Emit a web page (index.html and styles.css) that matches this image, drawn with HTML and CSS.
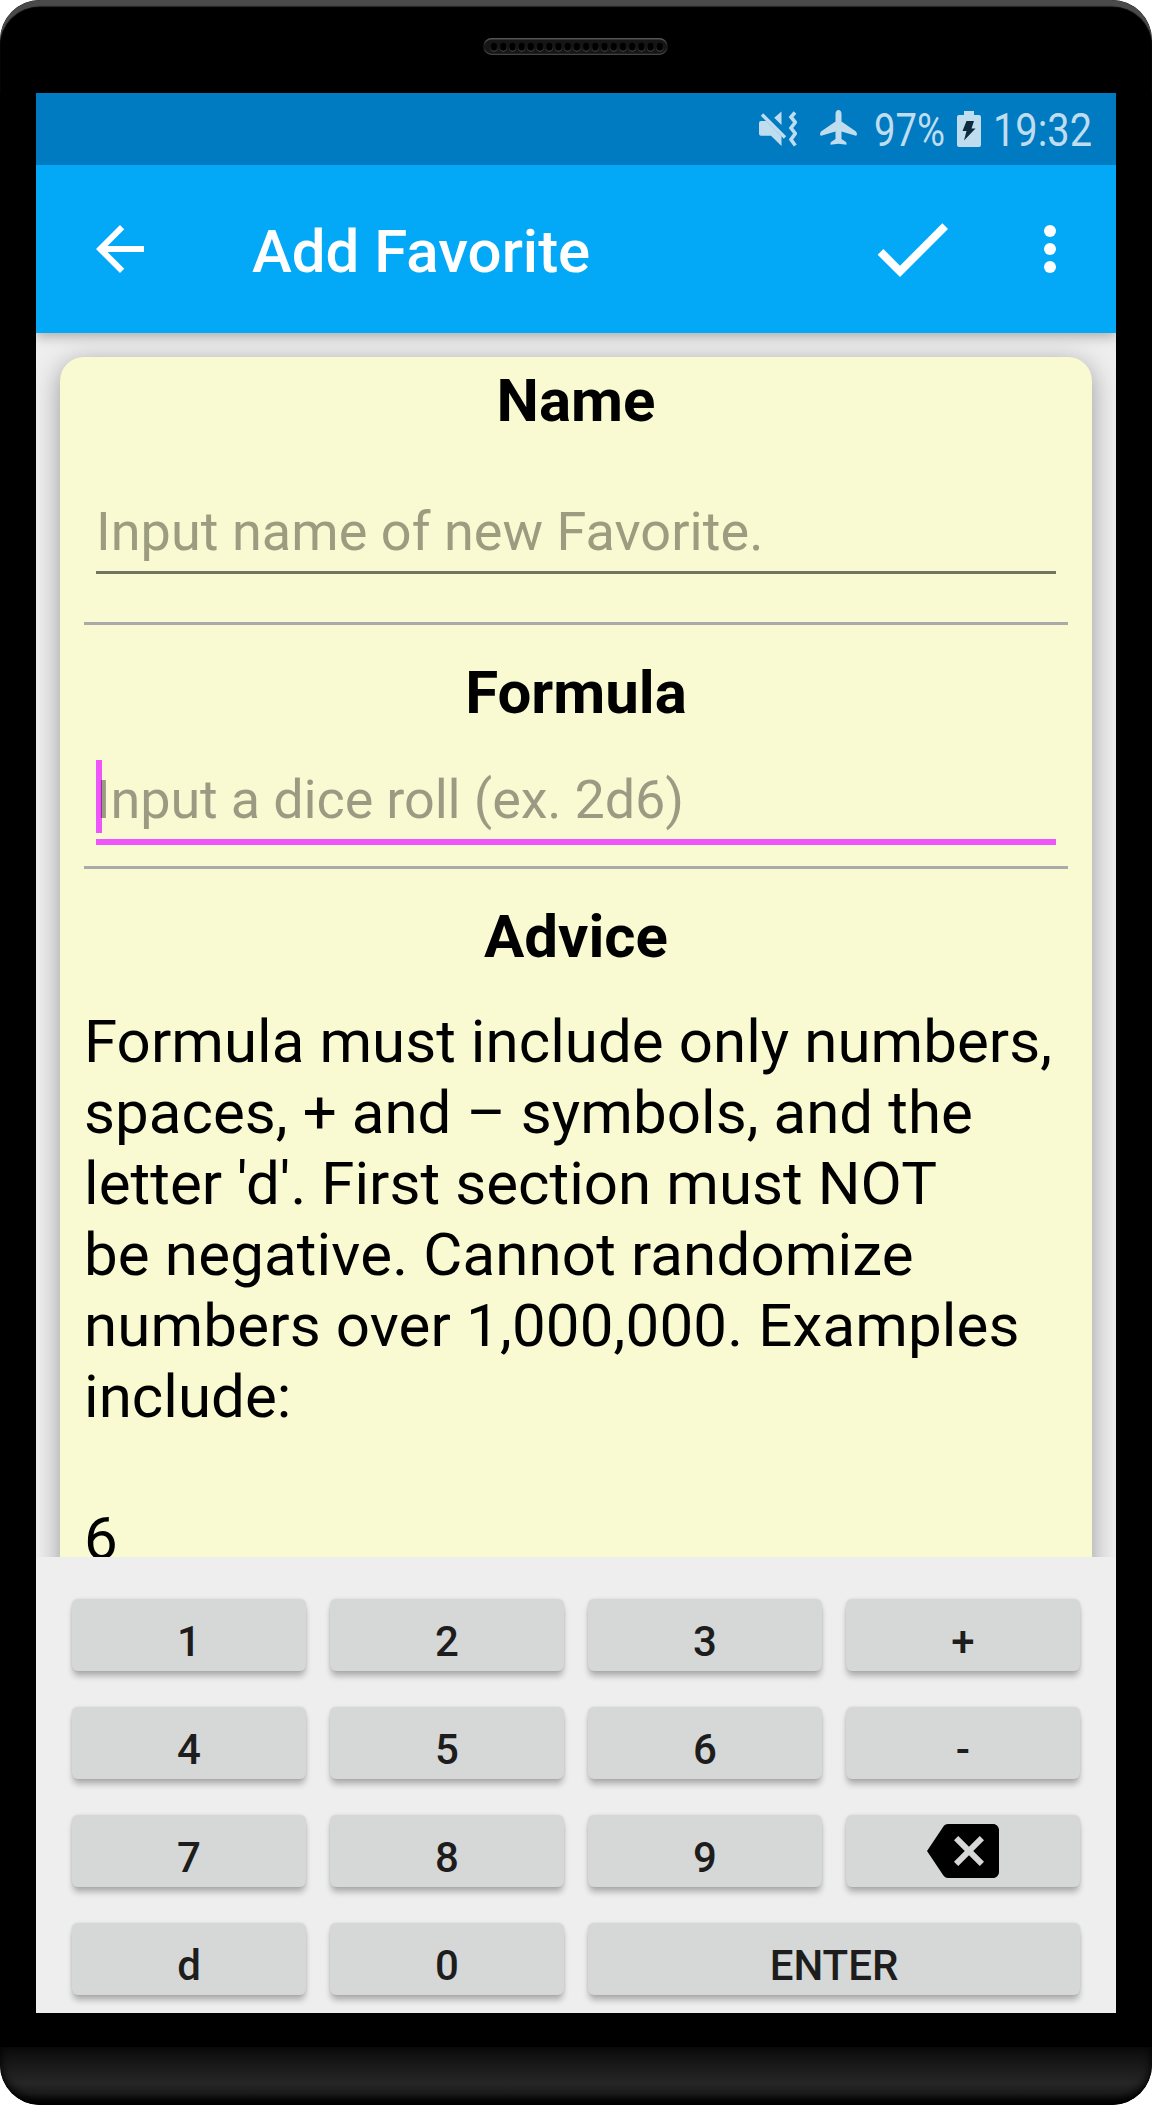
FILE: index.html
```html
<!DOCTYPE html>
<html lang="en">
<head>
<meta charset="utf-8">
<title>Add Favorite</title>
<link rel="stylesheet" href="styles.css">
</head>
<body>
<div class="phone">
  <div class="bezel-top">
    <svg class="speaker" viewBox="0 0 185 18">
      <defs>
        <linearGradient id="rim" x1="0" y1="0" x2="0" y2="1"><stop offset="0" stop-color="#555"/><stop offset=".5" stop-color="#161616"/><stop offset="1" stop-color="#444"/></linearGradient>
        <pattern id="holes" x="6.4" y="0" width="9.21" height="18" patternUnits="userSpaceOnUse"><ellipse cx="4.6" cy="9.6" rx="3.7" ry="4.1" fill="#4a4a4a"/><ellipse cx="4.6" cy="8.8" rx="3.5" ry="4" fill="#000"/></pattern>
      </defs>
      <rect x=".8" y=".8" width="183.4" height="15.6" rx="7.8" fill="#161616" stroke="url(#rim)" stroke-width="1.4"/>
      <rect x="6.4" y="0" width="175" height="18" fill="url(#holes)"/>
    </svg>
  </div>
  <main class="screen">
    <div class="status">
      <svg class="i-mute" viewBox="0 0 38 36"><path d="M3 3.5 26 26.5" stroke="#bfddee" stroke-width="3.4"/><path fill="#bfddee" d="M2 10h5.3L22.500 25.200V35L12 24.700H2q-2 0-2-2V12q0-2 2-2zM22.500 .500V14L15.200 6.700z"/><path d="M36 1.500 32 6l4.300 5.300L32 17l4.300 5.500L32 28.500l4.300 6" fill="none" stroke="#bfddee" stroke-width="3.6"/></svg>
      <svg class="i-plane" viewBox="0 0 37 35"><path fill="#bfddee" d="M18.500 0c2 0 3 2 3 4v7.500L36 21.500q1 1 1 3.500-1 1-2 .5L21.500 21.500V29l4.500 3q.8.600.5 2.800l-8-1-8 1q-.3-2.200.5-2.800l4.500-3v-7.500L2 25.500q-1 .5-2-.5 0-2.500 1-3.500l14.500-10V4c0-2 1-4 3-4z"/></svg>
      <svg class="t-batt" viewBox="0 0 71 62"><text x="0" y="49" textLength="71" lengthAdjust="spacingAndGlyphs">97%</text></svg>
      <svg class="i-batt" viewBox="0 0 24 36"><path fill="#bfddee" d="M7 0h10v4h5q2 0 2 2v28q0 2-2 2H2q-2 0-2-2V6q0-2 2-2h5z"/><path fill="#0d2b3e" d="M9.500 10h7.500l-2.500 7.500h4L7 29.500l2.500-9.500H5.500z"/></svg>
      <svg class="t-time" viewBox="0 0 99 62"><text x="0" y="49" textLength="99" lengthAdjust="spacingAndGlyphs">19:32</text></svg>
    </div>
    <header class="appbar">
      <svg class="back" viewBox="0 0 24 24"><path fill="#fff" d="M20 11H7.830l5.590-5.590L12 4l-8 8 8 8 1.410-1.410L7.830 13H20v-2z"/></svg>
      <h1 class="title">Add Favorite</h1>
      <svg class="done" viewBox="0 0 24 24"><path fill="#fff" d="M9 16.170 4.830 12l-1.420 1.410L9 19 21 7l-1.410-1.410z"/></svg>
      <svg class="more" viewBox="0 0 24 24"><g fill="#fff"><circle cx="12" cy="6" r="2"/><circle cx="12" cy="12" r="2"/><circle cx="12" cy="18" r="2"/></g></svg>
    </header>
    <section class="content">
      <div class="card">
        <h2 class="heading heading-first">Name</h2>
        <div class="field field-name">Input name of new Favorite.</div>
        <div class="rule"></div>
        <h2 class="heading heading-gap">Formula</h2>
        <div class="field field-formula"><span class="caret"></span><span class="hint">Input a dice roll (ex. 2d6)</span></div>
        <div class="rule"></div>
        <h2 class="heading heading-gap">Advice</h2>
        <p class="advice">Formula must include only numbers,<br>spaces, + and – symbols, and the<br>letter 'd'. First section must NOT<br><span class="loose">be negative. Cannot randomize<br>numbers over 1,000,000. Examples</span><br>include:<br><br>6</p>
      </div>
    </section>
    <section class="keypad">
      <div class="key">1</div><div class="key">2</div><div class="key">3</div><div class="key">+</div>
      <div class="key">4</div><div class="key">5</div><div class="key">6</div><div class="key">-</div>
      <div class="key">7</div><div class="key">8</div><div class="key">9</div>
      <div class="key key-del"><svg class="del" viewBox="0 0 24 24"><path d="M22 3H7c-.69 0-1.230.350-1.590.880L0 12l5.410 8.110c.36.530.9.890 1.590.890h15c1.100 0 2-.9 2-2V5c0-1.100-.9-2-2-2zm-3 12.590L17.590 17 14 13.410 10.410 17 9 15.590 12.590 12 9 8.410 10.410 7 14 10.590 17.590 7 19 8.410 15.410 12 19 15.590z"/></svg></div>
      <div class="key">d</div><div class="key">0</div><div class="key key-enter">ENTER</div>
    </section>
  </main>
  <div class="bezel-bottom"><div class="chin"></div></div>
</div>
</body>
</html>
```
FILE: styles.css
```css
* { box-sizing: border-box; }
body { margin: 0; background: #fff; font-family: Roboto, "Liberation Sans", sans-serif; }
h1, h2, p { margin: 0; }
svg { display: block; flex: none; }

.phone { width: 1152px; height: 2105px; display: flex; flex-direction: column; background: #000; border-radius: 40px; overflow: hidden; }
.bezel-top { height: 93px; display: flex; justify-content: center; padding: 38px 1px 0 0; border-radius: 40px 40px 0 0; box-shadow: inset 0 7px 1px -0.5px #4a4a4a; }
.speaker { width: 185px; height: 18px; }
.screen { width: 1080px; height: 1920px; margin: 0 36px; display: flex; flex-direction: column; background: #eee; overflow: hidden; }

.status { height: 72px; background: #007ac1; display: flex; align-items: flex-start; flex: none; padding-left: 723px; position: relative; z-index: 2; }
.status text { font-family: Roboto, sans-serif; font-size: 46px; fill: #bfddee; }
.i-mute { width: 38px; height: 36px; margin-top: 18px; }
.i-plane { width: 37px; height: 35px; margin: 17px 0 0 23px; }
.t-batt { width: 71px; height: 62px; margin: 4px 0 0 17px; overflow: visible; }
.i-batt { width: 24px; height: 36px; margin: 18px 0 0 12px; }
.t-time { width: 99px; height: 62px; margin: 4px 0 0 12px; overflow: visible; }

.appbar { height: 168px; flex: none; background: #03a9f7; display: flex; align-items: center; padding: 0 30px 0 48px; position: relative; z-index: 1; box-shadow: 0 3px 12px rgba(0,0,0,.3); }
.back { width: 72px; height: 72px; }
.title { margin-left: 96px; flex: 1; font-size: 60px; font-weight: 500; line-height: 72px; color: #fff; padding-top: 6px; }
.done { width: 96px; height: 96px; }
.more { width: 72px; height: 72px; margin-left: 54px; }

.content { height: 1224px; flex: none; overflow: hidden; padding: 24px 24px 0; }
.card { height: 1400px; background: #f9fad2; border-radius: 24px; padding: 0 24px; box-shadow: 0 6px 26px rgba(0,0,0,.36); color: #000; }
.heading { font-size: 60px; font-weight: 700; line-height: 80px; height: 80px; text-align: center; padding-top: 2px; }
.heading-first { padding-top: 4px; }
.heading-gap { margin-top: 26px; }
.field { margin: 0 12px; font-size: 54px; line-height: 64px; color: #9c9c80; letter-spacing: .05px; }
.field-name { height: 137px; padding-top: 63px; border-bottom: 3px solid #727460; margin-bottom: 48px; }
.field-formula { height: 114px; border-bottom: 6px solid #ee55fb; margin-bottom: 21px; padding-top: 37px; position: relative; }
.caret { position: absolute; left: 0; top: 29px; width: 6px; height: 73px; background: #ee55fb; }
.hint { position: relative; color: rgba(0,0,0,.38); letter-spacing: -.15px; }
.rule { height: 3px; background: #aaa; }
.advice { font-size: 60px; line-height: 71px; padding-top: 31px; white-space: nowrap; letter-spacing: .06px; }
.loose { letter-spacing: .16px; }

.keypad { flex: 1; background: #eee; padding: 42px 36px 0; display: grid; grid-template-columns: repeat(4, 234px); grid-auto-rows: 72px; gap: 36px 24px; align-content: start; }
.key { display: flex; align-items: center; justify-content: center; background: #d6d8d7; border-radius: 6px; font-size: 42px; font-weight: 500; color: #1d1d1d; padding-top: 13px; line-height: 50px; box-shadow: 0 6px 6px -1px rgba(0,0,0,.27), 0 0 3px rgba(0,0,0,.12); }
.key-del { padding-top: 0; }
.del { width: 72px; height: 72px; }
.key-enter { grid-column: span 2; }

.bezel-bottom { flex: 1; padding-top: 34px; }
.chin { height: 58px; background: linear-gradient(#0b0b0b, #262626 62%, #1c1c1c 80%, #000); border-radius: 0 0 40px 40px; box-shadow: inset 0 -4px 10px #000; }
```
